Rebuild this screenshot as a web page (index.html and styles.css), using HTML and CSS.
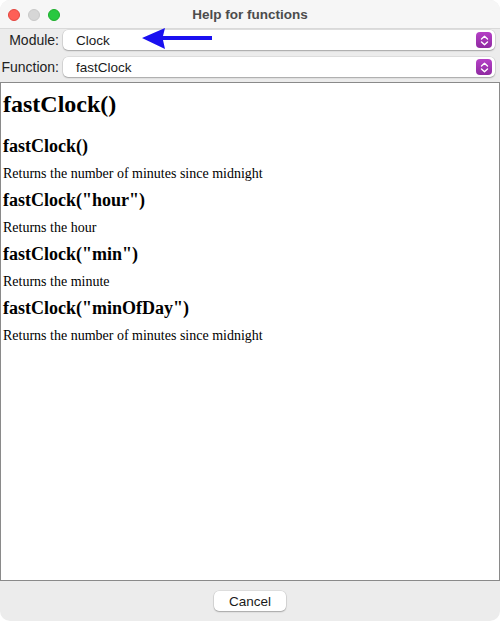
FILE: index.html
```html
<!DOCTYPE html>
<html>
<head>
<meta charset="utf-8">
<link rel="stylesheet" href="styles.css">
</head>
<body>
<div class="window">
  <div class="titlebar">
    <div class="lights">
      <span class="light red"></span>
      <span class="light grey"></span>
      <span class="light green"></span>
    </div>
    <div class="title">Help for functions</div>
    <div></div>
  </div>
  <div class="form">
    <label class="label">Module:</label>
    <div class="select">
      <span class="value">Clock</span>
      <span class="stepper"><svg width="9" height="11" viewBox="0 0 9 11"><path d="M1.5 4 L4.5 1.2 L7.5 4 M1.5 7 L4.5 9.8 L7.5 7" fill="none" stroke="#fff" stroke-width="1.4" stroke-linecap="round" stroke-linejoin="round"/></svg></span>
    </div>
    <label class="label">Function:</label>
    <div class="select">
      <span class="value">fastClock</span>
      <span class="stepper"><svg width="9" height="11" viewBox="0 0 9 11"><path d="M1.5 4 L4.5 1.2 L7.5 4 M1.5 7 L4.5 9.8 L7.5 7" fill="none" stroke="#fff" stroke-width="1.4" stroke-linecap="round" stroke-linejoin="round"/></svg></span>
    </div>
    <svg class="arrow" width="80" height="26" viewBox="0 0 80 26"><polygon points="0,11 23,1 21,9 70,9 70,13 21,13 23,22" fill="#1a10f0"/></svg>
  </div>
  <div class="content">
    <h1>fastClock()</h1>
    <h2>fastClock()</h2>
    <p>Returns the number of minutes since midnight</p>
    <h2>fastClock("hour")</h2>
    <p>Returns the hour</p>
    <h2>fastClock("min")</h2>
    <p>Returns the minute</p>
    <h2>fastClock("minOfDay")</h2>
    <p>Returns the number of minutes since midnight</p>
  </div>
  <div class="footer">
    <button class="btn">Cancel</button>
  </div>
</div>
</body>
</html>
```
FILE: styles.css
```css
html, body {
  margin: 0;
  padding: 0;
  background: #ffffff;
}
.window {
  width: 500px;
  height: 621px;
  background: #ececec;
  border-radius: 10px;
  overflow: hidden;
  display: flex;
  flex-direction: column;
  font-family: "Liberation Sans", Arial, sans-serif;
}
.titlebar {
  height: 28px;
  flex: none;
  background: #f6f6f6;
  border-bottom: 1px solid #d9d9d9;
  display: grid;
  grid-template-columns: 1fr auto 1fr;
  align-items: center;
}
.lights {
  display: flex;
  gap: 8px;
  padding-left: 8px;
  padding-top: 1px;
}
.light {
  width: 12px;
  height: 12px;
  border-radius: 50%;
  box-sizing: border-box;
}
.red { background: #fe5f57; border: 0.5px solid #e2463f; }
.grey { background: #d6d6d6; border: 0.5px solid #c8c8c8; }
.green { background: #28c840; border: 0.5px solid #1dad2b; }
.title {
  font-size: 13.5px;
  font-weight: bold;
  color: #4c4c4c;
  padding-top: 1px;
}
.form {
  position: relative;
  flex: none;
  display: grid;
  grid-template-columns: 59px 1fr;
  column-gap: 4px;
  row-gap: 7px;
  padding: 1px 5px 5px 0;
  align-items: center;
}
.label {
  text-align: right;
  font-size: 14px;
  color: #222;
  white-space: nowrap;
}
.select {
  height: 20px;
  background: #fff;
  border-radius: 5px;
  box-shadow: 0 0 0 0.5px rgba(0,0,0,0.12), 0 1px 1.5px rgba(0,0,0,0.25);
  display: flex;
  align-items: center;
  justify-content: space-between;
  padding: 0 3px 0 13px;
}
.value {
  font-size: 13.5px;
  color: #1a1a1a;
}
.stepper {
  width: 16px;
  height: 16px;
  border-radius: 4px;
  background: linear-gradient(#b540c6, #8f2aa1);
  display: flex;
  align-items: center;
  justify-content: center;
}
.stepper svg { display: block; }
.arrow {
  position: absolute;
  left: 142px;
  top: -2px;
}
.content {
  flex: 1;
  background: #fff;
  border: 1px solid #8a8a8a;
  padding: 0 2px;
  font-family: "Liberation Serif", "Times New Roman", serif;
  color: #000;
}
.content h1 {
  font-size: 24px;
  line-height: 28px;
  margin: 7px 0 18px;
}
.content h2 {
  font-size: 18px;
  line-height: 21px;
  margin: 0 0 8px;
}
.content p {
  font-size: 14px;
  line-height: 17px;
  margin: 0 0 8px;
}
.footer {
  height: 40px;
  flex: none;
  display: flex;
  justify-content: center;
  align-items: flex-start;
  padding-top: 10px;
  box-sizing: border-box;
}
.btn {
  width: 72px;
  height: 20px;
  background: #fff;
  border: none;
  border-radius: 5px;
  box-shadow: 0 0 0 0.5px rgba(0,0,0,0.12), 0 1px 1.5px rgba(0,0,0,0.25);
  font-family: "Liberation Sans", Arial, sans-serif;
  font-size: 13.5px;
  color: #1a1a1a;
  padding: 0;
}
```
